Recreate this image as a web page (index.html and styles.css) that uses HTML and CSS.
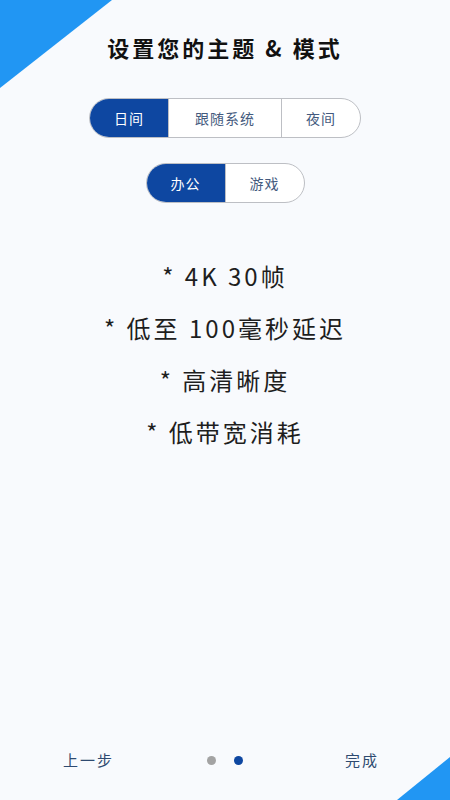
FILE: index.html
```html
<!DOCTYPE html>
<html lang="zh-CN">
<head>
    <meta charset="UTF-8">
    <meta name="viewport" content="width=device-width, initial-scale=1.0">
    <title>设置主题与模式</title>
    <link rel="stylesheet" href="styles.css">
</head>
<body>
    <div class="page">
        <div class="corner corner-top"></div>

        <h1 class="title">设置您的主题 &amp; 模式</h1>

        <div class="seg seg-theme">
            <button class="active">日间</button>
            <button class="wide">跟随系统</button>
            <button>夜间</button>
        </div>

        <div class="seg seg-mode">
            <button class="active">办公</button>
            <button>游戏</button>
        </div>

        <ul class="features">
            <li>* 4K 30帧</li>
            <li>* 低至 100毫秒延迟</li>
            <li>* 高清晰度</li>
            <li>* 低带宽消耗</li>
        </ul>

        <footer class="nav-bar">
            <a href="#" class="prev">上一步</a>
            <div class="dots">
                <span class="dot"></span>
                <span class="dot active"></span>
            </div>
            <a href="#" class="done">完成</a>
        </footer>

        <div class="corner corner-bottom"></div>
    </div>
</body>
</html>
```

FILE: styles.css
```css
:root {
    --bg: #F8FAFD;
    --accent: #0E47A1;
    --corner: #2196F3;
    --text: #1E1E1E;
    --muted: #445A7E;
    --border: #BDBFC4;
}

* {
    margin: 0;
    padding: 0;
    box-sizing: border-box;
}

body {
    font-family: "Noto Sans CJK SC", "Noto Sans", sans-serif;
    background-color: var(--bg);
    color: var(--text);
}

.page {
    position: relative;
    width: 450px;
    height: 800px;
    overflow: hidden;
    display: flex;
    flex-direction: column;
    align-items: center;
    padding-top: 33px;
}

.corner {
    position: absolute;
    background-color: var(--corner);
}

.corner-top {
    top: 0;
    left: 0;
    width: 112px;
    height: 88px;
    clip-path: polygon(0 0, 100% 0, 0 100%);
}

.corner-bottom {
    right: 0;
    bottom: 0;
    width: 53px;
    height: 43px;
    clip-path: polygon(100% 0, 100% 100%, 0 100%);
}

.title {
    font-size: 22px;
    line-height: 29px;
    font-weight: 700;
    letter-spacing: 3px;
    color: #111;
}

.seg {
    display: flex;
    height: 40px;
    border: 1.5px solid var(--border);
    border-radius: 20px;
    overflow: hidden;
    background-color: #fff;
}

.seg-theme {
    margin-top: 36px;
}

.seg-mode {
    margin-top: 25px;
}

.seg button {
    font-family: inherit;
    font-size: 14px;
    letter-spacing: 1px;
    color: var(--muted);
    background: none;
    border: none;
    padding: 0 24px;
    cursor: pointer;
}

.seg button + button {
    border-left: 1.5px solid var(--border);
}

.seg button.wide {
    padding: 0 26px;
}

.seg button.active {
    background-color: var(--accent);
    color: #fff;
}

.features {
    list-style: none;
    margin-top: 47px;
    text-align: center;
}

.features li {
    font-size: 24px;
    line-height: 52px;
    letter-spacing: 3px;
    color: var(--text);
}

.nav-bar {
    margin-top: auto;
    width: 100%;
    display: grid;
    grid-template-columns: 1fr auto 1fr;
    align-items: center;
    padding: 0 63px 30px;
}

.nav-bar a {
    font-size: 15px;
    line-height: 20px;
    letter-spacing: 2px;
    color: #2E4A70;
    text-decoration: none;
}

.nav-bar .done {
    justify-self: end;
    margin-right: 8px;
}

.dots {
    display: flex;
    gap: 18px;
}

.dot {
    width: 9px;
    height: 9px;
    border-radius: 50%;
    background-color: #A3A3A3;
}

.dot.active {
    background-color: var(--accent);
}
```
